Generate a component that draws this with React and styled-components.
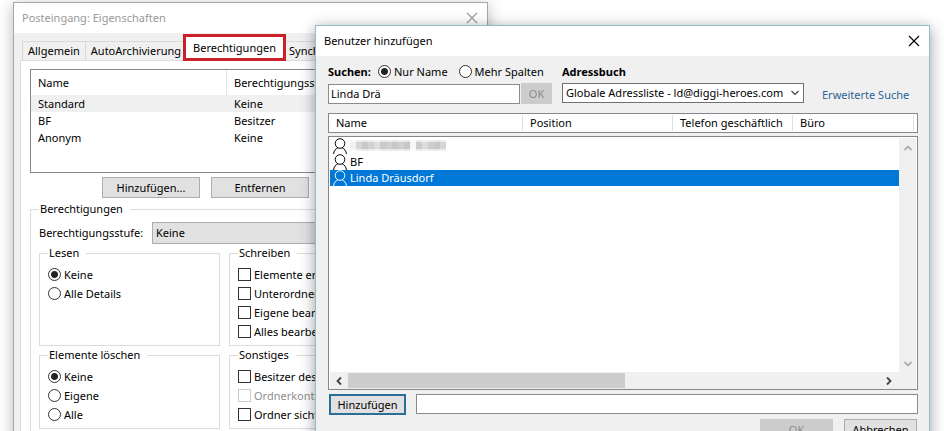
import React from 'react';
import styled, { createGlobalStyle, css } from 'styled-components';

const GlobalStyle = createGlobalStyle`
  * {
    box-sizing: border-box;
  }

  body {
    margin: 0;
    background: #fff;
  }

  body, button, input, select {
    font-family: "Noto Sans", "Open Sans", sans-serif;
    font-size: 11px;
    line-height: 16px;
    color: #000;
  }
`;

const Desktop = styled.main`
  position: relative;
  height: 100vh;
  overflow: hidden;
`;

const Window = styled.section`
  position: absolute;
  background: #f0f0f0;
  border: 1px solid #a6a6a6;
  box-shadow: 0 3px 14px rgba(0, 0, 0, 0.28);
`;

const PropertiesWindow = styled(Window)`
  top: 2px;
  left: 13px;
  width: 475px;
`;

const AddUserWindow = styled(Window)`
  top: 25px;
  left: 315px;
  right: 14px;
  border-color: #8fbccb;
  box-shadow: 0 3px 14px rgba(0, 0, 0, 0.4);
`;

const TitleBar = styled.header`
  display: flex;
  align-items: center;
  justify-content: space-between;
  height: 30px;
  padding: 0 9px 0 8px;
  background: #fff;
  color: ${(props) => (props.$inactive ? '#999' : '#000')};
`;

const Title = styled.h1`
  margin: 0;
  font-size: 11px;
  font-weight: normal;
`;

const CloseButton = styled.button`
  display: flex;
  padding: 0;
  border: 0;
  background: none;
  color: inherit;
`;

const Tabs = styled.div`
  display: flex;
  align-items: flex-end;
  height: 27px;
  padding: 0 8px;
`;

const Tab = styled.button`
  height: 19px;
  padding: 0 5px;
  border: 1px solid #d9d9d9;
  border-bottom: 0;
  border-left-width: ${(props) => (props.$first ? '1px' : '0')};
  background: #f0f0f0;
  white-space: nowrap;

  /* The selected tab lies over its neighbours */
  ${(props) => props.$active && css`
    height: 27px;
    margin: 0 -2px -1px -4px;
    padding: 0 7px;
    border: 3px solid #cb2027;
    background: #fff;
    z-index: 1;
  `}
`;

const TabPage = styled.div`
  margin: 0 6px;
  padding: 8px 9px;
  border: 1px solid #dcdcdc;
  background: #fff;
`;

const PermissionTable = styled.table`
  display: block;
  height: 104px;
  border: 1px solid #828790;

  thead, tbody {
    display: block;
  }

  tr {
    display: grid;
    grid-template-columns: 196px 1fr;
    height: 17px;
  }

  thead tr {
    height: 25px;
  }

  tbody tr:first-child {
    background: #f0f0f0;
  }

  th, td {
    padding: 1px 7px 0;
    font-weight: normal;
    text-align: left;
  }

  th {
    padding-top: 5px;
  }

  th:first-child {
    border-right: 1px solid #e5e5e5;
  }
`;

const Button = styled.button`
  width: ${(props) => props.$width || 98}px;
  height: 21px;
  padding: 0;
  border: 1px solid #adadad;
  background: #e1e1e1;

  &:disabled {
    border-color: #ccc;
    background: #ccc;
    color: #8a8a8a;
  }

  ${(props) => props.$primary && css`
    border: 2px solid #2b6f99;
  `}
`;

const PermissionButtons = styled.div`
  display: flex;
  gap: 11px;
  padding: 4px 0 3px 72px;
`;

const Group = styled.fieldset`
  min-width: 0;
  margin: 0;
  padding: 4px 8px;
  border: 1px solid #dcdcdc;

  legend {
    padding: 0 7px 0 1px;
  }
`;

const LevelRow = styled.div`
  display: flex;
  align-items: center;
  gap: 9px;
  padding-top: 1px;

  label {
    width: 104px;
    white-space: nowrap;
  }
`;

const LevelSelect = styled.select`
  flex: 1;
  height: 22px;
  padding: 0 3px;
  border: 1px solid #adadad;
  border-radius: 0;
  background: #e1e1e1;
  appearance: none;
`;

const GroupGrid = styled.div`
  display: grid;
  grid-template-columns: 181px 1fr;
  gap: 1px 9px;
  padding-top: 1px;
`;

const Choice = styled.label`
  display: flex;
  align-items: center;
  gap: 3px;
  height: 19px;
  white-space: nowrap;
  color: ${(props) => (props.$disabled ? '#8f8f8f' : 'inherit')};
`;

const Radio = styled.input.attrs({ type: 'radio' })`
  width: 13px;
  height: 13px;
  margin: 0;
  border: 1px solid #333;
  border-radius: 50%;
  background: #fff;
  appearance: none;

  &:checked {
    background: radial-gradient(circle, #222 3px, #fff 4px);
  }
`;

const Checkbox = styled.input.attrs({ type: 'checkbox' })`
  width: 13px;
  height: 13px;
  margin: 0;
  border: 1px solid #333;
  background: #fff;
  appearance: none;

  &:disabled {
    border-color: #ccc;
  }
`;

const DialogBody = styled.div`
  padding: 6px 11px 10px 12px;
`;

const SearchArea = styled.div`
  display: flex;
  gap: 10px;
`;

const SearchColumn = styled.div`
  display: flex;
  flex-direction: column;
  gap: 2px;
`;

const SearchModes = styled.div`
  display: flex;
  align-items: center;
  gap: 11px;
  height: 19px;
  white-space: nowrap;
`;

const Strong = styled.strong`
  width: 39px;
`;

const SearchRow = styled.div`
  display: flex;
  align-items: center;
  gap: 1px;
`;

const TextInput = styled.input.attrs({ type: 'text' })`
  width: ${(props) => (props.$grow ? 'auto' : '192px')};
  flex: ${(props) => (props.$grow ? 1 : 'none')};
  height: 20px;
  padding: 0 2px;
  border: 1px solid #8c8c8c;
  background: #fff;
`;

const BookLabel = styled.label`
  height: 19px;
  font-weight: bold;
  line-height: 19px;
`;

const BookSelect = styled.div`
  display: grid;
  align-items: center;
  width: 242px;

  select {
    grid-area: 1 / 1;
    height: 20px;
    padding: 0 3px;
    border: 1px solid #707070;
    border-radius: 0;
    background: #fff;
    appearance: none;
  }

  svg {
    grid-area: 1 / 1;
    justify-self: end;
    margin-right: 4px;
    color: #444;
    pointer-events: none;
  }
`;

const AdvancedLink = styled.a`
  align-self: flex-end;
  margin: 0 0 1px 8px;
  color: #2a6496;
  text-decoration: none;
  white-space: nowrap;
`;

const ContactHeader = styled.table`
  display: block;
  height: 20px;
  margin: 9px 0 3px;
  border: 1px solid #828790;
  background: #fff;

  thead {
    display: block;
  }

  tr {
    display: grid;
    grid-template-columns: 194px 150px 120px 1fr;
    margin-right: 3px;
  }

  th {
    height: 16px;
    margin: 1px 0;
    padding: 0 6px 0 7px;
    border-right: 1px solid #e0e0e0;
    font-weight: normal;
    line-height: 16px;
    text-align: left;
    white-space: nowrap;
  }
`;

const ContactList = styled.div`
  display: grid;
  grid-template-columns: 1fr 17px;
  grid-template-rows: 234px 17px;
  padding: 1px 1px 0;
  border: 1px solid #828790;
  background: #fff;
`;

const Contacts = styled.ul`
  margin: 0;
  padding: 0;
  list-style: none;
`;

const Contact = styled.li`
  display: flex;
  align-items: center;
  gap: 3px;
  height: 16px;
  padding-left: 3px;
  background: ${(props) => (props.$selected ? '#0078d7' : 'transparent')};
  color: ${(props) => (props.$selected ? '#fff' : '#000')};
`;

const VerticalScroll = styled.div`
  display: flex;
  flex-direction: column;
  justify-content: space-between;
  align-items: center;
  padding: 5px 0 3px;
  background: #f0f0f0;
  color: #b0b0b0;
`;

const HorizontalScroll = styled.div`
  display: flex;
  align-items: center;
  grid-column: 1 / 3;
  padding: 0 22px 0 4px;
  gap: 4px;
  background: #f0f0f0;
  color: #444;
`;

const Thumb = styled.div`
  flex: 1;
  height: 15px;

  &::before {
    content: '';
    display: block;
    width: 52%;
    height: 100%;
    background: #cdcdcd;
  }
`;

const AddRow = styled.div`
  display: flex;
  gap: 10px;
  padding: 4px 0 4px 1px;
`;

const DialogButtons = styled.footer`
  display: flex;
  justify-content: flex-end;
  gap: 11px;
  padding-right: 1px;
`;

const CloseIcon = () => (
  <svg width="12" height="12" viewBox="0 0 12 12" fill="none" stroke="currentColor" strokeWidth="1.1">
    <path d="M1 1 L11 11 M11 1 L1 11" />
  </svg>
);

const rotation = { down: 0, left: 90, up: 180, right: 270 };

const Chevron = ({ direction, width = 1.8 }) => (
  <svg width="10" height="10" viewBox="0 0 10 10" fill="none" stroke="currentColor" strokeWidth={width}>
    <path d="M1.5 3 L5 6.5 L8.5 3" transform={`rotate(${rotation[direction]} 5 5)`} />
  </svg>
);

const PersonIcon = () => (
  <svg width="14" height="16" viewBox="0 0 14 16" fill="none" stroke="currentColor" strokeWidth="1">
    <circle cx="7" cy="5.5" r="4.8" />
    <path d="M0.6 16 C0.8 12.8 2.6 10.9 4.8 9.9 M9.2 9.9 C11.4 10.9 13.2 12.8 13.4 16" />
  </svg>
);

const shades = [
  '#f1f1f1', '#d6d6d6', '#c9c9c9', '#d2d2d2', '#dedede', '#cacaca', '#d0d0d0', '#c8c8c8', '#cfcfcf',
  '#c6c6c6', '#f6f6f6', '#cccccc', '#dcdcdc', '#cecece', '#c8c8c8', '#d6d6d6',
];

// Pixelated name of the first contact
const HiddenName = () => (
  <svg width="100" height="14" viewBox="0 0 100 14" role="img" aria-label="Name">
    {shades.map((shade, i) => (
      <g key={i} fill={shade}>
        <rect x={i * 6} y="1" width="6" height="11" opacity="0.4" />
        <rect x={i * 6} y="3" width="6" height="7" />
      </g>
    ))}
  </svg>
);

const permissions = [
  ['Standard', 'Keine'],
  ['BF', 'Besitzer'],
  ['Anonym', 'Keine'],
];

const RadioGroup = ({ title, name, options }) => (
  <Group>
    <legend>{title}</legend>
    {options.map((option, i) => (
      <Choice key={option}>
        <Radio name={name} defaultChecked={i === 0} />
        {option}
      </Choice>
    ))}
  </Group>
);

const CheckGroup = ({ title, options, disabled }) => (
  <Group>
    <legend>{title}</legend>
    {options.map((option) => (
      <Choice key={option} $disabled={option === disabled}>
        <Checkbox disabled={option === disabled} />
        {option}
      </Choice>
    ))}
  </Group>
);

const Properties = () => (
  <PropertiesWindow>
    <TitleBar $inactive>
      <Title>Posteingang: Eigenschaften</Title>
      <CloseButton aria-label="Schließen"><CloseIcon /></CloseButton>
    </TitleBar>
    <Tabs role="tablist">
      <Tab role="tab" $first>Allgemein</Tab>
      <Tab role="tab">AutoArchivierung</Tab>
      <Tab role="tab" aria-selected="true" $active>Berechtigungen</Tab>
      <Tab role="tab">Synchronisierung</Tab>
    </Tabs>
    <TabPage>
      <PermissionTable cellSpacing="0">
        <thead>
          <tr>
            <th>Name</th>
            <th>Berechtigungsstufe</th>
          </tr>
        </thead>
        <tbody>
          {permissions.map(([name, level]) => (
            <tr key={name}>
              <td>{name}</td>
              <td>{level}</td>
            </tr>
          ))}
        </tbody>
      </PermissionTable>
      <PermissionButtons>
        <Button>Hinzufügen...</Button>
        <Button>Entfernen</Button>
      </PermissionButtons>
      <Group>
        <legend>Berechtigungen</legend>
        <LevelRow>
          <label htmlFor="level">Berechtigungsstufe:</label>
          <LevelSelect id="level">
            <option>Keine</option>
          </LevelSelect>
        </LevelRow>
        <GroupGrid>
          <RadioGroup title="Lesen" name="read" options={['Keine', 'Alle Details']} />
          <CheckGroup
            title="Schreiben"
            options={['Elemente erstellen', 'Unterordner erstellen', 'Eigene bearbeiten', 'Alles bearbeiten']}
          />
          <RadioGroup title="Elemente löschen" name="delete" options={['Keine', 'Eigene', 'Alle']} />
          <CheckGroup
            title="Sonstiges"
            options={['Besitzer des Ordners', 'Ordnerkontaktperson', 'Ordner sichtbar']}
            disabled="Ordnerkontaktperson"
          />
        </GroupGrid>
      </Group>
    </TabPage>
  </PropertiesWindow>
);

const AddUser = () => (
  <AddUserWindow>
    <TitleBar>
      <Title>Benutzer hinzufügen</Title>
      <CloseButton aria-label="Schließen"><CloseIcon /></CloseButton>
    </TitleBar>
    <DialogBody>
      <SearchArea>
        <SearchColumn>
          <SearchModes>
            <Strong>Suchen:</Strong>
            <Choice><Radio name="mode" defaultChecked />Nur Name</Choice>
            <Choice><Radio name="mode" />Mehr Spalten</Choice>
          </SearchModes>
          <SearchRow>
            <TextInput aria-label="Suchen" defaultValue="Linda Drä" />
            <Button $width={31} disabled>OK</Button>
          </SearchRow>
        </SearchColumn>
        <SearchColumn>
          <BookLabel htmlFor="book">Adressbuch</BookLabel>
          <BookSelect>
            <select id="book">
              <option>Globale Adressliste - ld@diggi-heroes.com</option>
            </select>
            <Chevron direction="down" width={1.2} />
          </BookSelect>
        </SearchColumn>
        <AdvancedLink href="#">Erweiterte Suche</AdvancedLink>
      </SearchArea>
      <ContactHeader cellSpacing="0">
        <thead>
          <tr>
            <th>Name</th>
            <th>Position</th>
            <th>Telefon geschäftlich</th>
            <th>Büro</th>
          </tr>
        </thead>
      </ContactHeader>
      <ContactList>
        <Contacts>
          <Contact><PersonIcon /><HiddenName /></Contact>
          <Contact><PersonIcon />BF</Contact>
          <Contact $selected><PersonIcon />Linda Dräusdorf</Contact>
        </Contacts>
        <VerticalScroll>
          <Chevron direction="up" />
          <Chevron direction="down" />
        </VerticalScroll>
        <HorizontalScroll>
          <Chevron direction="left" />
          <Thumb />
          <Chevron direction="right" />
        </HorizontalScroll>
      </ContactList>
      <AddRow>
        <Button $width={77} $primary>Hinzufügen</Button>
        <TextInput aria-label="Benutzer" $grow />
      </AddRow>
      <DialogButtons>
        <Button $width={73} disabled>OK</Button>
        <Button $width={73}>Abbrechen</Button>
      </DialogButtons>
    </DialogBody>
  </AddUserWindow>
);

const App = () => (
  <>
    <GlobalStyle />
    <Desktop>
      <Properties />
      <AddUser />
    </Desktop>
  </>
);

export default App;
